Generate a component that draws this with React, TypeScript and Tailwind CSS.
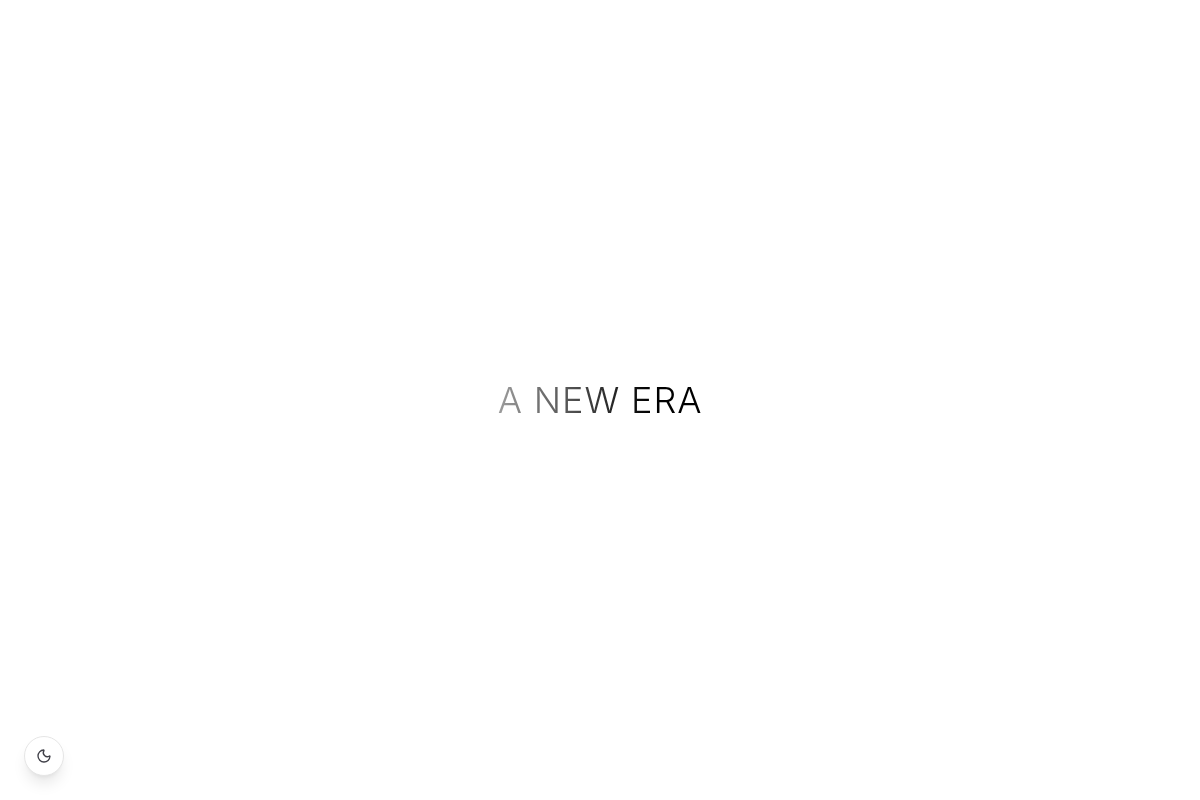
import { Moon } from "lucide-react";

export default function App() {
  return (
    <main className="relative flex min-h-screen items-center justify-center bg-white font-['Inter',sans-serif]">
      <h1 className="bg-linear-to-r/srgb from-[#9c9c9c] to-black to-75% bg-clip-text text-4xl font-light tracking-wide text-transparent">
        A NEW ERA
      </h1>
      <button
        type="button"
        aria-label="Switch to dark theme"
        className="fixed bottom-6 left-6 flex size-10 items-center justify-center rounded-full border border-neutral-200 bg-white text-zinc-700 shadow-lg"
      >
        <Moon className="size-4" aria-hidden="true" />
      </button>
    </main>
  );
}
